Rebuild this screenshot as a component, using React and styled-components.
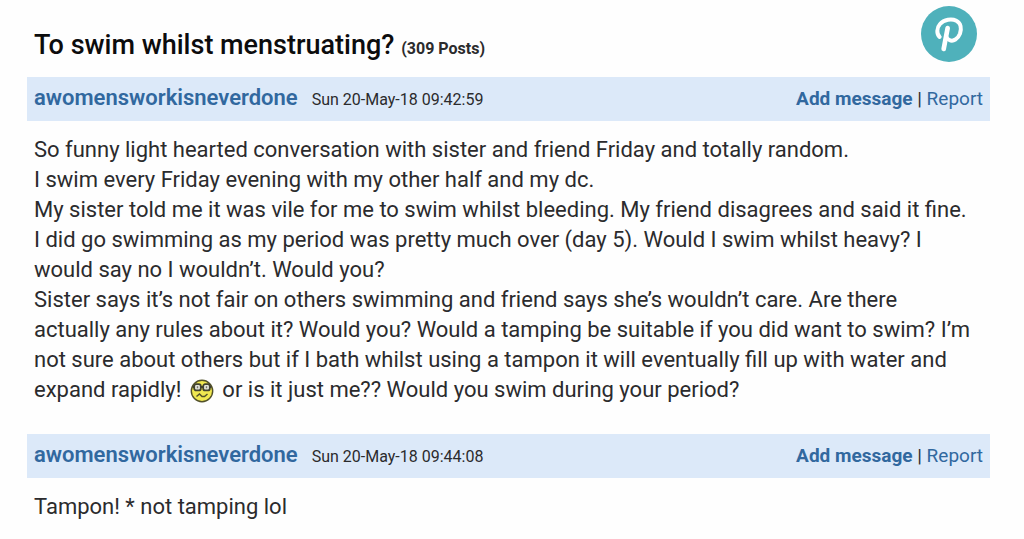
import React from 'react'
import styled, { createGlobalStyle } from 'styled-components'

const GlobalStyle = createGlobalStyle`
  body {
    background: #fefefe;
    color: #2b2b2d;
    font: 22px/30px Roboto, "Liberation Sans", sans-serif;
    margin: 0;
  }
`

const Page = styled.main`
  padding: 0 34px 0 27px;
`

const Header = styled.header`
  align-items: flex-end;
  display: flex;
  height: 77px;
  justify-content: space-between;
  padding: 0 13px 0 7px;
  box-sizing: border-box;
`

const Title = styled.h1`
  color: #0c0c0d;
  font-size: 27px;
  font-weight: 500;
  line-height: 30px;
  margin: 0 0 13px;
`

const Count = styled.small`
  color: #2b2b2d;
  font-size: 16px;
  font-weight: 700;
`

const PinLink = styled.a`
  background: #4fb1bb;
  border-radius: 50%;
  color: #fff;
  height: 56px;
  margin-bottom: 15px;
  width: 56px;
`

const PostBar = styled.div`
  align-items: center;
  background: #dce9f9;
  display: flex;
  height: 44px;
  justify-content: space-between;
  padding: 0 7px;
`

const Byline = styled.div`
  align-items: baseline;
  display: flex;
  gap: 14px;
`

const Author = styled.a`
  color: #31689f;
  font-size: 22px;
  font-weight: 600;
  text-decoration: none;
`

const Time = styled.time`
  font-size: 16px;
`

const Actions = styled.div`
  font-size: 19px;
`

const Action = styled.a`
  color: #31689f;
  font-weight: ${props => (props.$strong ? 700 : 400)};
  text-decoration: none;
`

const Body = styled.div`
  padding: 14px 12px 29px 7px;
`

const Paragraph = styled.p`
  margin: 0;
`

const Face = styled.svg`
  height: 24px;
  margin: 0 3px;
  vertical-align: -6px;
  width: 24px;
`

const PinterestIcon = () => (
  <svg width="56" height="56" viewBox="0 0 168 168" fill="none" stroke="currentColor" strokeLinecap="round" aria-hidden="true">
    <path
      d="M56 93C46 84 47 65 57 54C69 40 92 37 106 44C120 51 122 68 117 83C111 99 97 108 85 102C80 100 77 96 75 91"
      strokeWidth="12"
    />
    <path d="M80 66L68 129" strokeWidth="14" />
  </svg>
)

const DizzyFace = () => (
  <Face viewBox="0 0 24 24" role="img" aria-label="confused">
    <circle cx="12" cy="12" r="10.7" fill="#f0e850" stroke="#52512a" strokeWidth="1.4" />
    <path d="M2.5 8h19" stroke="#42422f" strokeWidth="2" />
    <rect x="4.2" y="5.2" width="6.6" height="6.2" rx="2" fill="#e4e5dc" stroke="#42422f" strokeWidth="1.8" />
    <rect x="13.2" y="5.2" width="6.6" height="6.2" rx="2" fill="#e4e5dc" stroke="#42422f" strokeWidth="1.8" />
    <path d="M7.5 7.3v2M16.5 7.3v2" stroke="#77776a" strokeWidth="1.4" />
    <path d="M6.5 17.5l3-2.5 2.5 2.5h2.5l3-2.5" fill="none" stroke="#52512a" strokeWidth="1.5" />
  </Face>
)

const Post = ({ author, time, children }) => (
  <article>
    <PostBar>
      <Byline>
        <Author href="#author">{author}</Author>
        <Time>{time}</Time>
      </Byline>
      <Actions>
        <Action href="#reply" $strong>Add message</Action> | <Action href="#report">Report</Action>
      </Actions>
    </PostBar>
    <Body>{children}</Body>
  </article>
)

const App = () => (
  <Page>
    <GlobalStyle />
    <Header>
      <Title>
        To swim whilst menstruating? <Count>(309 Posts)</Count>
      </Title>
      <PinLink href="#pin" aria-label="Pin on Pinterest">
        <PinterestIcon />
      </PinLink>
    </Header>

    <Post author="awomensworkisneverdone" time="Sun 20-May-18 09:42:59">
      <Paragraph>So funny light hearted conversation with sister and friend Friday and totally random.</Paragraph>
      <Paragraph>I swim every Friday evening with my other half and my dc.</Paragraph>
      <Paragraph>My sister told me it was vile for me to swim whilst bleeding. My friend disagrees and said it fine.</Paragraph>
      <Paragraph>
        I did go swimming as my period was pretty much over (day 5). Would I swim whilst heavy? I
        would say no I wouldn’t. Would you?
      </Paragraph>
      <Paragraph>
        Sister says it’s not fair on others swimming and friend says she’s wouldn’t care. Are there
        actually any rules about it? Would you? Would a tamping be suitable if you did want to swim? I’m
        not sure about others but if I bath whilst using a tampon it will eventually fill up with water and
        expand rapidly! <DizzyFace /> or is it just me?? Would you swim during your period?
      </Paragraph>
    </Post>

    <Post author="awomensworkisneverdone" time="Sun 20-May-18 09:44:08">
      <Paragraph>Tampon! * not tamping lol</Paragraph>
    </Post>
  </Page>
)

export default App
